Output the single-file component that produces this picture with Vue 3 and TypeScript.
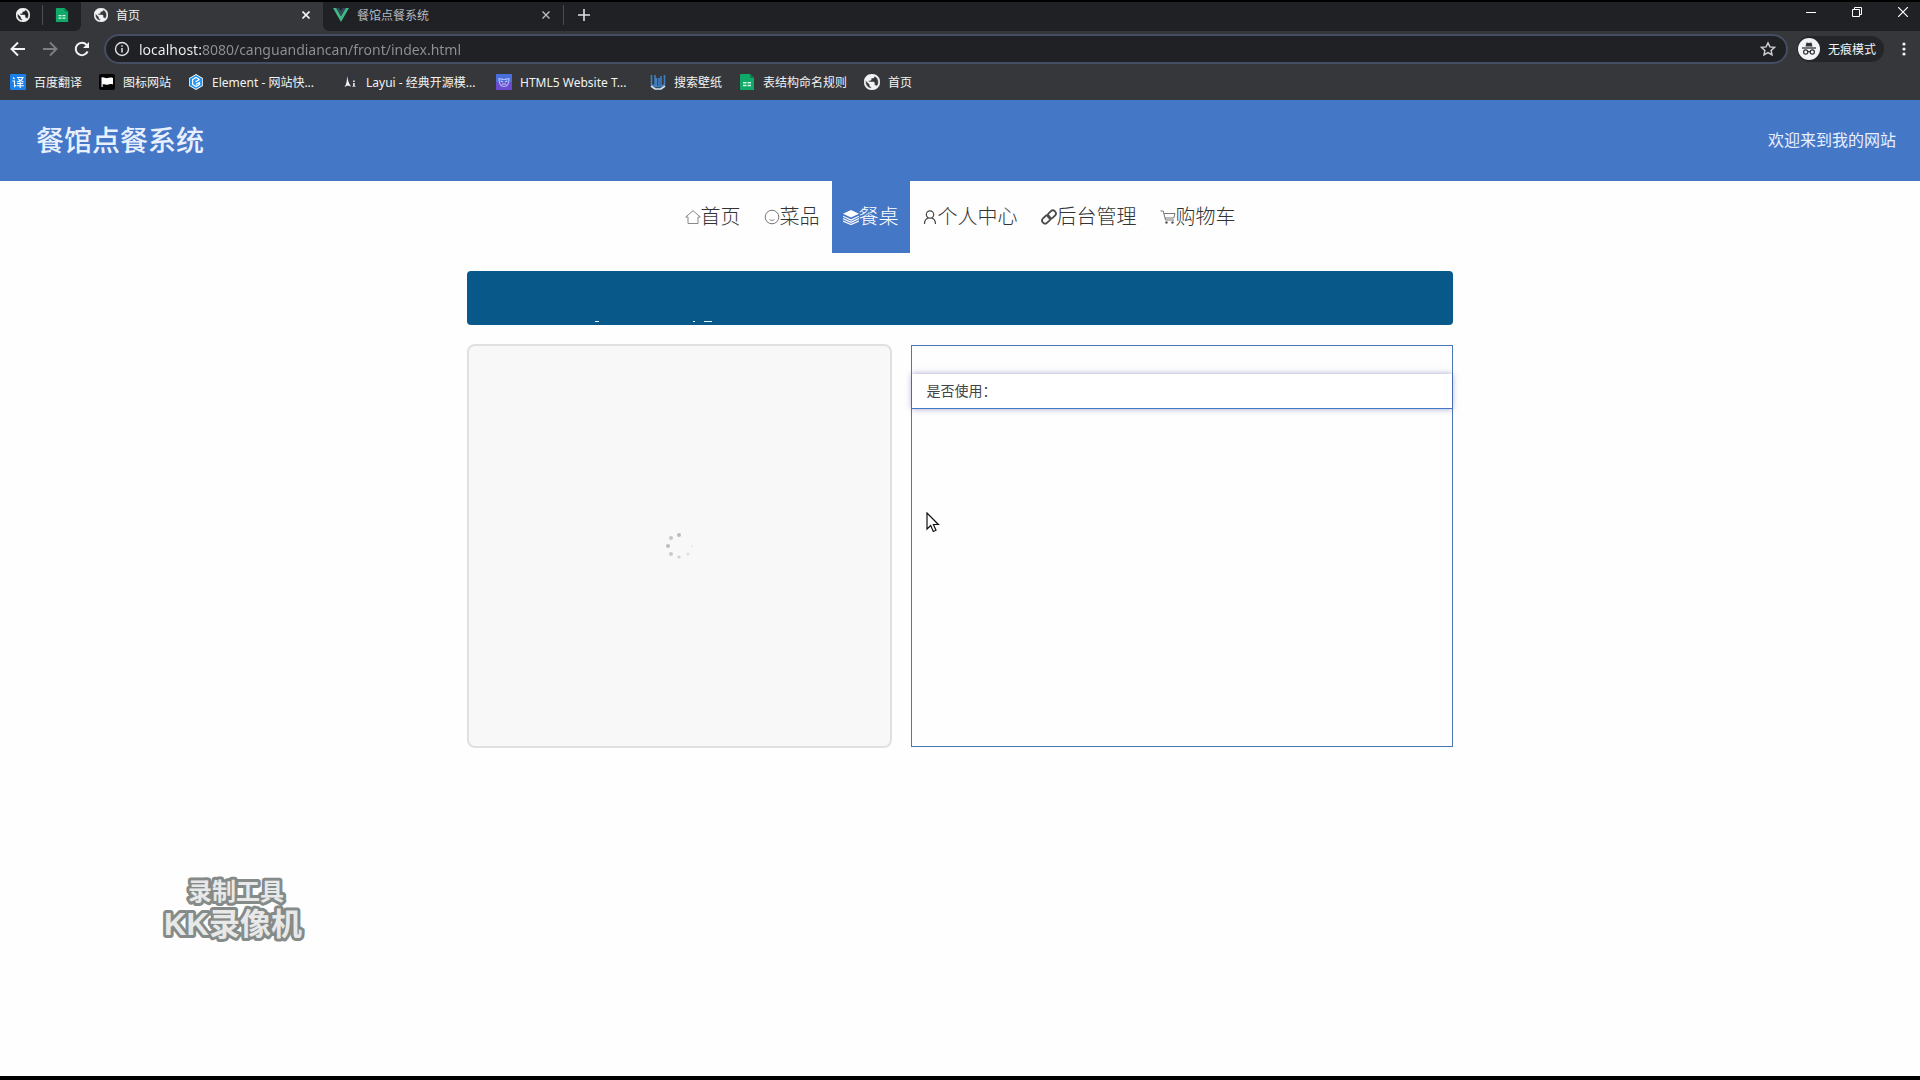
<script setup lang="ts">
import { ref } from 'vue'

interface Bookmark {
  icon: string
  label: string
  wide?: boolean
}

interface NavItem {
  icon: string
  label: string
}

const address = ref('localhost:8080/canguandiancan/front/index.html')

const bookmarks: Bookmark[] = [
  { icon: 'translate', label: '百度翻译' },
  { icon: 'flag', label: '图标网站' },
  { icon: 'element', label: 'Element - 网站快...', wide: true },
  { icon: 'layui', label: 'Layui - 经典开源模...', wide: true },
  { icon: 'html5', label: 'HTML5 Website T...', wide: true },
  { icon: 'wallpaper', label: '搜索壁纸' },
  { icon: 'sheet', label: '表结构命名规则' },
  { icon: 'globe', label: '首页' },
]

const navItems: NavItem[] = [
  { icon: 'home', label: '首页' },
  { icon: 'face', label: '菜品' },
  { icon: 'layers', label: '餐桌' },
  { icon: 'user', label: '个人中心' },
  { icon: 'link', label: '后台管理' },
  { icon: 'cart', label: '购物车' },
]
const activeNav = ref('餐桌')

// Spinner dots fade round the circle, starting from the top.
const dots = [
  { x: 13, y: 2, r: 2, o: 0.8 },
  { x: 5, y: 5, r: 2, o: 0.65 },
  { x: 2, y: 13, r: 2, o: 0.75 },
  { x: 5, y: 21, r: 2, o: 0.6 },
  { x: 13, y: 24, r: 1.6, o: 0.5 },
  { x: 22, y: 21, r: 1.6, o: 0.3 },
  { x: 26, y: 13, r: 1.2, o: 0.15 },
]
</script>

<template>
  <div class="screen">
    <svg class="defs" aria-hidden="true">
      <symbol id="i-globe" viewBox="2 2 20 20">
        <path d="M12 2C6.480 2 2 6.480 2 12s4.480 10 10 10 10-4.480 10-10S17.520 2 12 2zm-1 17.930c-3.950-.490-7-3.850-7-7.930 0-.620.080-1.210.210-1.790L9 15v1c0 1.100.900 2 2 2v1.930zm6.900-2.540c-.260-.810-1-1.390-1.900-1.390h-1v-3c0-.550-.450-1-1-1H8v-2h2c.550 0 1-.450 1-1V7h2c1.100 0 2-.900 2-2v-.410c2.930 1.190 5 4.060 5 7.410 0 2.080-.800 3.970-2.100 5.390z" fill="#f1f3f4" stroke="#f1f3f4" stroke-width=".6" />
      </symbol>
      <symbol id="i-sheet" viewBox="0 0 16 16">
        <path d="M2 0h9l4 4v12H2a1 1 0 0 1-1-1V1a1 1 0 0 1 1-1z" fill="#0fa968" />
        <path d="M11 0l4 4h-4z" fill="#0a7d4c" />
        <path d="M4 8h3.500v1.500H4zM8.500 8H12v1.500H8.500zM4 10.800h3.500v1.500H4zM8.500 10.800H12v1.500H8.500z" fill="#d7f5e7" />
      </symbol>
      <symbol id="i-vue" viewBox="0 0 16 16">
        <path d="M0 1h3.300L8 9.200 12.700 1H16L8 15z" fill="#41b883" />
        <path d="M3.300 1h2.900L8 4.200 9.800 1h2.900L8 9.200z" fill="#35495e" />
      </symbol>
      <symbol id="i-translate" viewBox="0 0 16 16">
        <rect width="16" height="16" rx="1" fill="#1a80ea" />
        <path d="M3 3.500l1.500 1.500M2.300 7h2.200v5.500l1.600-1.400M7 3.500h6c-1 2.500-3 3.800-6 4.500M8 4.500c1.300 2 3 3 5.500 3.500M7.200 9.500h6M6.800 11.700h7M10.200 8v6" fill="none" stroke="#fff" stroke-width="1.100" />
      </symbol>
      <symbol id="i-flag" viewBox="0 0 16 16">
        <rect width="16" height="16" rx="2" fill="#050505" />
        <path d="M2.500 3.500c2-.8 4 1 6 .6 2-.5 3-.8 5.500-.2v6.500c-2-.8-3.500-.2-5.500.3-2 .3-3-.9-4.800-.4V13H2.500z" fill="#fff" />
      </symbol>
      <symbol id="i-element" viewBox="0 0 16 16">
        <path d="M8 0l6.800 4v8L8 16l-6.800-4V4z" fill="#fff" />
        <path d="M8 1l6 3.500v7L8 15l-6-3.500v-7z" fill="#2196f3" />
        <path d="M11.500 5.400 8 3.400 4.600 5.500v5L8 12.500l3.500-2V8.500L8 10.400M11.500 5.400 7.500 7.800" fill="none" stroke="#fff" stroke-width="1.200" />
      </symbol>
      <symbol id="i-layui" viewBox="0 0 16 16">
        <rect width="16" height="16" fill="#33363c" />
        <path d="M5 2c1 4 1.500 7 4 10.500l-3.500-1L2.500 13C4.500 10 5 7 5 2z" fill="#f4f4f4" />
        <path d="M11 6.500h1.800v1.500H11zM11 9h1.800v3l1.500.8H9.800l1.200-.8z" fill="#ddd" />
      </symbol>
      <symbol id="i-html5" viewBox="0 0 16 16">
        <rect width="16" height="8" fill="#4b6fda" />
        <rect y="8" width="16" height="8" fill="#6a4bcd" />
        <path d="M3 4.500c1.500 0 2 1 5 1s3.500-1 5-1c0 5-1.500 8-5 8s-5-3-5-8z" fill="none" stroke="#aebcff" stroke-width="1.200" />
        <path d="M4.800 7l2 1M11.200 7l-2 1M6 10h4" stroke="#cbd4ff" stroke-width="1.200" />
      </symbol>
      <symbol id="i-wallpaper" viewBox="0 0 16 16">
        <path d="M1.500 1v9.500l3.500 2V1M6.500 4v8.500h2.500V4M11 2v10.500l3.500-2V1" fill="none" stroke="#3f7fc0" stroke-width="1.600" />
        <path d="M1 12l4 3h6l4-3" fill="none" stroke="#d6e6f5" stroke-width="1.600" />
      </symbol>

      <symbol id="i-home" viewBox="0 0 16 16">
        <path d="M.7 8 8 1.700 15.300 8H13v6.500H3V8z" fill="none" stroke="#888" stroke-linejoin="round" />
      </symbol>
      <symbol id="i-face" viewBox="0 0 16 16">
        <circle cx="8" cy="8" r="6.800" fill="none" stroke="#777" />
        <path d="M5.500 10.500c1.200 1.200 3.800 1.200 5 0" fill="none" stroke="#888" />
      </symbol>
      <symbol id="i-layers" viewBox="0 0 16 16">
        <path d="M8 1l8 3.800-8 3.800-8-3.800z" fill="#fff" />
        <path d="M0 7.200 8 11l8-3.800M0 9.600l8 3.800 8-3.800M0 12l8 3.500 8-3.500" fill="none" stroke="#fff" stroke-width="1.200" />
      </symbol>
      <symbol id="i-user" viewBox="0 0 16 16">
        <circle cx="8" cy="5.500" r="3.700" fill="none" stroke="#444" stroke-width="1.200" />
        <path d="M2.500 15c0-3.500 2-5.500 4-6M13.500 15c0-3.500-2-5.500-4-6" fill="none" stroke="#444" stroke-width="1.200" />
      </symbol>
      <symbol id="i-link" viewBox="0 0 16 16">
        <g fill="none" stroke="#4a4a4a" stroke-width="1.800">
          <rect x="6.300" y="2.500" width="9" height="6" rx="3" transform="rotate(-45 10.800 5.500)" />
          <rect x=".7" y="7.500" width="9" height="6" rx="3" transform="rotate(-45 5.200 10.500)" />
        </g>
      </symbol>
      <symbol id="i-cart" viewBox="0 0 16 16">
        <path d="M.5 2h2.700l2.300 9h8.500M4 4.500h11L13.700 9H5" fill="none" stroke="#777" />
        <circle cx="6.500" cy="13.500" r="1.200" fill="#555" />
        <circle cx="12.500" cy="13.500" r="1.200" fill="#555" />
      </symbol>
    </svg>

    <header class="browser">
      <div class="tab-strip">
        <button class="pinned" aria-label="首页"><svg class="ico14"><use href="#i-globe" /></svg></button>
        <span class="divider"></span>
        <button class="pinned" aria-label="表结构命名规则"><svg class="ico14"><use href="#i-sheet" /></svg></button>
        <div class="tab active">
          <svg class="ico14"><use href="#i-globe" /></svg>
          <button class="tab-title">首页</button>
          <button class="close" aria-label="关闭"><svg width="8" height="8" viewBox="0 0 8 8"><path d="M.5.5l7 7M7.500.5l-7 7" stroke="currentColor" stroke-width="1.600" /></svg></button>
        </div>
        <div class="tab">
          <svg class="ico16"><use href="#i-vue" /></svg>
          <button class="tab-title">餐馆点餐系统</button>
          <button class="close" aria-label="关闭"><svg width="8" height="8" viewBox="0 0 8 8"><path d="M.5.5l7 7M7.500.5l-7 7" stroke="currentColor" stroke-width="1.400" /></svg></button>
        </div>
        <span class="divider"></span>
        <button class="new-tab" aria-label="新标签页"><svg width="12" height="12" viewBox="0 0 12 12"><path d="M6 0v12M0 6h12" stroke="#dfe1e5" stroke-width="1.600" /></svg></button>
        <div class="window-controls">
          <button aria-label="最小化"><svg width="10" height="10" viewBox="0 0 10 10"><path d="M0 5.500h10" stroke="#fff" /></svg></button>
          <button aria-label="还原"><svg width="10" height="10" viewBox="0 0 10 10"><path d="M.5 2.500h7v7h-7zM2.500 2.500v-2h7v7h-2" fill="none" stroke="#fff" /></svg></button>
          <button aria-label="关闭窗口"><svg width="10" height="10" viewBox="0 0 10 10"><path d="M0 0l10 10M10 0 0 10" stroke="#fff" stroke-width="1.200" /></svg></button>
        </div>
      </div>

      <div class="toolbar">
        <button class="tool" aria-label="后退"><svg width="16" height="16" viewBox="0 0 16 16"><path d="M15 8H2M8 1.500 1.500 8 8 14.500" fill="none" stroke="#f1f3f4" stroke-width="1.900" /></svg></button>
        <button class="tool" aria-label="前进"><svg width="16" height="16" viewBox="0 0 16 16"><path d="M1 8h13M8 1.500 14.500 8 8 14.500" fill="none" stroke="#7c7f83" stroke-width="1.900" /></svg></button>
        <button class="tool" aria-label="重新加载"><svg width="16" height="16" viewBox="0 0 16 16"><path d="M13.600 10.500A6.200 6.200 0 1 1 12.600 3.800L14 5.200" fill="none" stroke="#f1f3f4" stroke-width="2" /><path d="M15 1v6H9z" fill="#f1f3f4" /></svg></button>
        <div class="omnibox">
          <svg width="16" height="16" viewBox="0 0 16 16"><circle cx="8" cy="8" r="6.500" fill="none" stroke="#dfe1e5" stroke-width="1.400" /><path d="M8 7v4.500M8 4.200v1.600" stroke="#dfe1e5" stroke-width="1.500" /></svg>
          <input v-model="address" class="address" type="text" aria-label="地址" spellcheck="false" />
          <button class="star" aria-label="收藏"><svg width="16" height="16" viewBox="0 0 16 16"><path d="M8 1.800l1.900 4.100 4.500.5-3.300 3 .9 4.400L8 11.600l-4 2.200.9-4.400-3.300-3 4.500-.5z" fill="none" stroke="#d0d3d7" stroke-width="1.400" /></svg></button>
        </div>
        <button class="incognito">
          <svg width="22" height="22" viewBox="0 0 22 22"><circle cx="11" cy="11" r="11" fill="#f1f3f4" /><path d="M7.500 8.500 8.500 4.500l2.500.6 2.500-.6 1 4z" fill="#303236" /><path d="M4 10h14" stroke="#303236" stroke-width="1.300" /><g fill="none" stroke="#303236" stroke-width="1.200"><circle cx="7.700" cy="14" r="2.100" /><circle cx="14.300" cy="14" r="2.100" /><path d="M9.800 13.600h2.400" /></g></svg>
          <span>无痕模式</span>
        </button>
        <button class="menu" aria-label="菜单"><svg width="4" height="14" viewBox="0 0 4 14"><g fill="#f1f3f4"><circle cx="2" cy="2" r="1.600" /><circle cx="2" cy="7" r="1.600" /><circle cx="2" cy="12" r="1.600" /></g></svg></button>
      </div>

      <nav class="bookmarks" aria-label="书签">
        <a v-for="b in bookmarks" :key="b.label" href="#" class="bookmark">
          <svg class="ico16"><use :href="'#i-' + b.icon" /></svg>
          <span :class="{ wide: b.wide }">{{ b.label }}</span>
        </a>
      </nav>
    </header>

    <div class="site-header">
      <h1>餐馆点餐系统</h1>
      <span class="welcome">欢迎来到我的网站</span>
    </div>

    <nav class="site-nav" aria-label="主导航">
      <a
        v-for="n in navItems"
        :key="n.label"
        href="#"
        :class="{ current: n.label === activeNav }"
        @click.prevent="activeNav = n.label"
      ><svg class="ico16"><use :href="'#i-' + n.icon" /></svg>{{ n.label }}</a>
    </nav>

    <main class="content">
      <div class="banner">
        <svg width="120" height="4" viewBox="0 0 120 4" aria-hidden="true"><path d="M0 .5h4M98 .5h2M109 .5h8" stroke="#dff3fb" /></svg>
      </div>
      <div class="detail">
        <section class="carousel" aria-label="图片">
          <svg width="28" height="28" viewBox="-1 -1 28 28">
            <circle v-for="(d, i) in dots" :key="i" :cx="d.x" :cy="d.y" :r="d.r" :opacity="d.o" fill="#aaa" />
          </svg>
        </section>
        <section class="info">
          <div class="info-row">是否使用：</div>
          <svg class="cursor" width="14" height="21" viewBox="0 0 14 21" aria-hidden="true"><path d="M1 1v16l3.700-3.500 2.600 6 2.700-1.200-2.600-5.800h5z" fill="#fff" stroke="#111" stroke-width="1.200" /></svg>
        </section>
      </div>
    </main>

    <svg class="watermark" width="160" height="76" viewBox="0 0 160 76">
      <text x="82" y="24" font-size="24">录制工具</text>
      <text x="79" y="59" font-size="31">KK录像机</text>
    </svg>
    <div class="bottom-edge"></div>
  </div>
</template>

<style>
body {
  background: #fff;
}
</style>

<style scoped>
* {
  box-sizing: border-box;
}
.screen {
  position: relative;
  display: flex;
  flex-direction: column;
  min-height: 100vh;
  font-family: "Noto Sans", "Noto Sans CJK SC", sans-serif;
  background: #fefefe;
}
.defs {
  position: absolute;
  width: 0;
  height: 0;
}
svg {
  display: block;
  flex: none;
}
.ico14 {
  width: 14px;
  height: 14px;
}
.ico16 {
  width: 16px;
  height: 16px;
}
button {
  display: flex;
  align-items: center;
  justify-content: center;
  margin: 0;
  padding: 0;
  border: 0;
  background: none;
  color: inherit;
  font: inherit;
}
a {
  color: inherit;
  text-decoration: none;
}
.browser {
  height: 100px;
  border-top: 2px solid #000;
  background: #36373a;
  color: #f1f3f4;
  font-size: 12px;
}
.tab-strip {
  display: flex;
  height: 29px;
  padding-left: 4px;
  padding-bottom: 4px;
  align-items: center;
  background: #202124;
}
.pinned {
  width: 38px;
  height: 24px;
}
.divider {
  width: 1px;
  height: 20px;
  background: #4a4c50;
}
.tab {
  display: flex;
  align-items: center;
  width: 240px;
  height: 25px;
  padding: 0 13px 0 10px;
  gap: 8px;
  color: #b8bbc0;
}
.tab.active {
  position: relative;
  width: 242px;
  height: 29px;
  margin-bottom: -4px;
  padding-bottom: 4px;
  padding-left: 13px;
  background: #36373a;
  color: #f1f3f4;
}
.tab.active::before,
.tab.active::after {
  content: "";
  position: absolute;
  bottom: 0;
  width: 6px;
  height: 6px;
}
.tab.active::before {
  right: 100%;
  background: radial-gradient(circle at 0 0, transparent 6px, #36373a 6px);
}
.tab.active::after {
  left: 100%;
  background: radial-gradient(circle at 100% 0, transparent 6px, #36373a 6px);
}
.tab-title {
  flex: 1;
  justify-content: flex-start;
}
.new-tab {
  width: 40px;
}
.window-controls {
  display: flex;
  margin-left: auto;
  padding-bottom: 6px;
}
.window-controls button {
  width: 46px;
  height: 20px;
}
.window-controls button:last-child {
  width: 40px;
  padding-left: 6px;
}
.toolbar {
  display: flex;
  align-items: center;
  height: 36px;
  padding: 0 4px 0 2px;
}
.tool {
  width: 32px;
}
.omnibox {
  display: flex;
  flex: 1;
  align-items: center;
  height: 30px;
  margin: 0 9px 0 6px;
  padding: 0 10px 0 8px;
  gap: 9px;
  border: 2px solid #454d62;
  border-radius: 15px;
  background: #202124;
}
.address {
  flex: 1;
  min-width: 0;
  height: 24px;
  padding: 0;
  border: 0;
  outline: 0;
  background: linear-gradient(90deg, #f1f3f4 62px, #8e9196 62px);
  background-clip: text;
  -webkit-background-clip: text;
  color: transparent;
  font-family: inherit;
  font-size: 14px;
}
.incognito {
  height: 26px;
  padding: 0 8px 0 1px;
  gap: 8px;
  border-radius: 13px;
  background: #242528;
}
.menu {
  width: 24px;
  margin-left: 8px;
}
.bookmarks {
  display: flex;
  align-items: center;
  height: 30px;
  padding: 0 10px;
  gap: 17px;
}
.bookmark {
  display: flex;
  align-items: center;
  gap: 8px;
  white-space: nowrap;
}
.wide {
  min-width: 113px;
}
.site-header {
  display: flex;
  align-items: center;
  justify-content: space-between;
  height: 81px;
  padding: 0 24px 4px 36px;
  background: #4577c7;
  color: #e8f0ff;
}
h1 {
  margin: 0;
  font-size: 28px;
  font-weight: 500;
}
.welcome {
  font-size: 16px;
}
.site-nav {
  display: flex;
  justify-content: center;
  gap: 1px;
  color: #333;
  font-size: 20px;
  font-weight: 300;
  line-height: 72px;
}
.site-nav a {
  display: flex;
  align-items: center;
  height: 72px;
  padding: 0 11px;
}
.site-nav .current {
  background: #4577c7;
  color: #fff;
}
.content {
  flex: 1;
  width: 100%;
  max-width: 986px;
  margin: 0 auto;
  padding-top: 18px;
}
.banner {
  display: flex;
  align-items: flex-end;
  height: 54px;
  padding-left: 128px;
  border-radius: 4px;
  background: #08598a;
}
.detail {
  display: grid;
  grid-template-columns: 425fr 543fr;
  gap: 19px;
  margin-top: 19px;
}
.carousel {
  display: flex;
  align-items: center;
  justify-content: center;
  height: 404px;
  border: 2px solid #e0e0e0;
  border-radius: 8px;
  background: #f8f8f8;
}
.info {
  position: relative;
  height: 402px;
  margin-top: 1px;
  padding-top: 28px;
  border: 1px solid #4a77b4;
}
.info-row {
  height: 35px;
  padding-left: 15px;
  border-bottom: 1px solid #4577c7;
  box-shadow: 0 0 6px rgba(70, 70, 160, 0.5);
  background: #fff;
  color: #444;
  font-size: 14px;
  line-height: 34px;
}
.cursor {
  position: absolute;
  top: 166px;
  left: 14px;
}
.watermark {
  position: absolute;
  bottom: 128px;
  left: 154px;
}
.watermark text {
  fill: #e8e8e8;
  stroke: #858b88;
  stroke-width: 6px;
  stroke-linejoin: round;
  paint-order: stroke;
  text-anchor: middle;
  font-family: "Liberation Sans", "Noto Sans CJK SC", sans-serif;
  font-weight: 700;
}
.bottom-edge {
  height: 4px;
  background: #000;
}
</style>
